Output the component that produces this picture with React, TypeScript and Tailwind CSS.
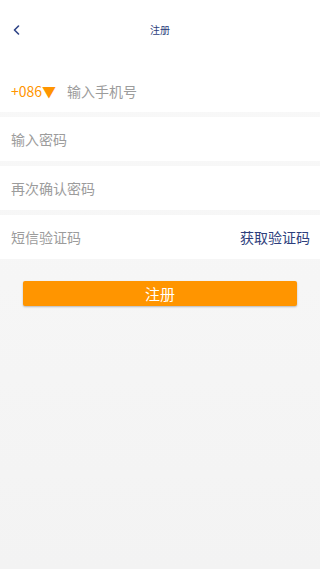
import React from "react";

export default function App() {
  const font = { fontFamily: '"Noto Sans CJK SC", "Noto Sans", sans-serif' };
  return (
    <div className="w-[320px] h-[569px] bg-gradient-to-b from-[#f9f9f9] to-[#f3f3f3] flex flex-col" style={font}>
      <div className="bg-white h-[70px] flex flex-col">
        <div className="h-[60px] relative flex items-center justify-center">
          <svg className="absolute left-[12px] top-[25px]" width="9" height="10" viewBox="0 0 9 10">
            <path d="M6.5 1 L2.5 5 L6.5 9" fill="none" stroke="#2d4386" strokeWidth="1.6" strokeLinecap="round" strokeLinejoin="round" />
          </svg>
          <span className="text-[10px] text-[#2d3e7c] leading-none">注册</span>
        </div>
      </div>
      <div className="flex flex-col gap-[5px]">
        <div className="bg-white h-[43px] flex items-center px-[11px] -mt-[1px]">
          <span className="text-[14px] text-[#ff9500] leading-none">+086▼</span>
          <span className="text-[14px] text-[#9c9c9c] leading-none ml-[11px]">输入手机号</span>
        </div>
        <div className="bg-white h-[44px] flex items-center px-[11px]">
          <span className="text-[14px] text-[#9c9c9c] leading-none">输入密码</span>
        </div>
        <div className="bg-white h-[44px] flex items-center px-[11px]">
          <span className="text-[14px] text-[#9c9c9c] leading-none">再次确认密码</span>
        </div>
        <div className="bg-white h-[44px] flex items-center justify-between pl-[11px] pr-[10px]">
          <span className="text-[14px] text-[#9c9c9c] leading-none">短信验证码</span>
          <span className="text-[14px] text-[#2d3e7c] leading-none">获取验证码</span>
        </div>
      </div>
      <div className="px-[23px] mt-[22px]">
        <button className="w-full h-[25px] bg-[#ff9500] rounded-[2px] shadow-[0_1px_2px_rgba(0,0,0,0.25)] text-white text-[15px] leading-none flex items-center justify-center">
          注册
        </button>
      </div>
    </div>
  );
}
